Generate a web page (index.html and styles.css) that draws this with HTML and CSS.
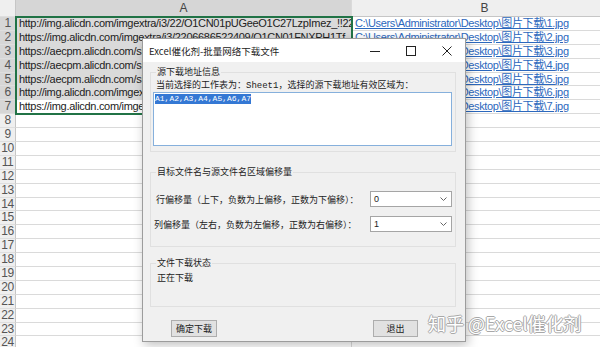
FILE: index.html
```html
<!DOCTYPE html>
<html lang="zh-CN">
<head>
    <meta charset="UTF-8">
    <title>Excel催化剂-批量网络下载文件</title>
    <link rel="stylesheet" href="styles.css">
</head>
<body>
    <div class="sheet">
        <div class="row head">
            <div class="rh"></div>
            <div class="cell a on">A</div>
            <div class="cell b">B</div>
        </div>
        <div class="row"><div class="rh on">1</div><div class="cell a hl">http://img.alicdn.com/imgextra/i3/22/O1CN01pUGeeO1C27LzpImez_!!2206686522409</div><div class="cell b"><a>C:\Users\Administrator\Desktop\图片下载\1.jpg</a></div></div>
        <div class="row"><div class="rh on">2</div><div class="cell a hl">https://img.alicdn.com/imgextra/i3/2206686522409/O1CN01FNXPH1Tf</div><div class="cell b"><a>C:\Users\Administrator\Desktop\图片下载\2.jpg</a></div></div>
        <div class="row"><div class="rh on">3</div><div class="cell a hl">https://aecpm.alicdn.com/simba/img/TB1XotJXQfb_XXXXXXXXXXX</div><div class="cell b"><a>C:\Users\Administrator\Desktop\图片下载\3.jpg</a></div></div>
        <div class="row"><div class="rh on">4</div><div class="cell a hl">https://aecpm.alicdn.com/simba/img/TB1JNHwKFXXXXafXVXXSutb</div><div class="cell b"><a>C:\Users\Administrator\Desktop\图片下载\4.jpg</a></div></div>
        <div class="row"><div class="rh on">5</div><div class="cell a hl">https://aecpm.alicdn.com/simba/img/TB183NQapLM8KJjSZFBSutJ</div><div class="cell b"><a>C:\Users\Administrator\Desktop\图片下载\5.jpg</a></div></div>
        <div class="row"><div class="rh on">6</div><div class="cell a hl">http://img.alicdn.com/imgextra/i1/2206686522409/O1CN01nF</div><div class="cell b"><a>C:\Users\Administrator\Desktop\图片下载\6.jpg</a></div></div>
        <div class="row"><div class="rh on">7</div><div class="cell a">https://img.alicdn.com/imgextra/i4/2206686522409/O1CN01w</div><div class="cell b"><a>C:\Users\Administrator\Desktop\图片下载\7.jpg</a></div></div>
        <div class="row"><div class="rh">8</div><div class="cell a"></div><div class="cell b"></div></div>
        <div class="row"><div class="rh">9</div><div class="cell a"></div><div class="cell b"></div></div>
        <div class="row"><div class="rh">10</div><div class="cell a"></div><div class="cell b"></div></div>
        <div class="row"><div class="rh">11</div><div class="cell a"></div><div class="cell b"></div></div>
        <div class="row"><div class="rh">12</div><div class="cell a"></div><div class="cell b"></div></div>
        <div class="row"><div class="rh">13</div><div class="cell a"></div><div class="cell b"></div></div>
        <div class="row"><div class="rh">14</div><div class="cell a"></div><div class="cell b"></div></div>
        <div class="row"><div class="rh">15</div><div class="cell a"></div><div class="cell b"></div></div>
        <div class="row"><div class="rh">16</div><div class="cell a"></div><div class="cell b"></div></div>
        <div class="row"><div class="rh">17</div><div class="cell a"></div><div class="cell b"></div></div>
        <div class="row"><div class="rh">18</div><div class="cell a"></div><div class="cell b"></div></div>
        <div class="row"><div class="rh">19</div><div class="cell a"></div><div class="cell b"></div></div>
        <div class="row"><div class="rh">20</div><div class="cell a"></div><div class="cell b"></div></div>
        <div class="row"><div class="rh">21</div><div class="cell a"></div><div class="cell b"></div></div>
        <div class="row"><div class="rh">22</div><div class="cell a"></div><div class="cell b"></div></div>
        <div class="row"><div class="rh">23</div><div class="cell a"></div><div class="cell b"></div></div>
        <div class="row"><div class="rh">24</div><div class="cell a"></div><div class="cell b"></div></div>

        <!-- 选区边框 A1:A7 -->
        <div class="sel-box"></div>
    </div>

    <div class="dialog">
        <div class="titlebar">
            <span class="title">Excel催化剂-批量网络下载文件</span>
            <div class="win-btns">
                <span class="win-btn"><svg width="10" height="10" viewBox="0 0 10 10"><path d="M0 5.5h10" stroke="#222" stroke-width="1"/></svg></span>
                <span class="win-btn"><svg width="10" height="10" viewBox="0 0 10 10"><rect x="0.5" y="0.5" width="9" height="9" fill="none" stroke="#222" stroke-width="1"/></svg></span>
                <span class="win-btn"><svg width="10" height="10" viewBox="0 0 10 10"><path d="M0.5 0.5L9.5 9.5M9.5 0.5L0.5 9.5" stroke="#222" stroke-width="1"/></svg></span>
            </div>
        </div>

        <div class="dlg-body">
            <fieldset class="group g1">
                <legend>源下载地址信息</legend>
                <div class="line">当前选择的工作表为：<span class="mono">Sheet1</span>，选择的源下载地址有效区域为：</div>
                <div class="textbox"><span class="selected">A1,A2,A3,A4,A5,A6,A7</span></div>
            </fieldset>

            <fieldset class="group g2">
                <legend>目标文件名与源文件名区域偏移量</legend>
                <div class="opt first">
                    <span>行偏移量（上下，负数为上偏移，正数为下偏移）：</span>
                    <div class="combo"><span class="val">0</span><svg width="7" height="4" viewBox="0 0 7 4"><path d="M0.5 0.5L3.5 3.5L6.5 0.5" fill="none" stroke="#666"/></svg></div>
                </div>
                <div class="opt second">
                    <span>列偏移量（左右，负数为左偏移，正数为右偏移）：</span>
                    <div class="combo"><span class="val">1</span><svg width="7" height="4" viewBox="0 0 7 4"><path d="M0.5 0.5L3.5 3.5L6.5 0.5" fill="none" stroke="#666"/></svg></div>
                </div>
            </fieldset>

            <fieldset class="group g3">
                <legend>文件下载状态</legend>
                <div class="line status">正在下载</div>
            </fieldset>

            <div class="actions">
                <button class="btn ok">确定下载</button>
                <button class="btn quit">退出</button>
            </div>
        </div>
    </div>

    <div class="watermark">知乎 @Excel催化剂</div>
</body>
</html>
```

FILE: styles.css
```css
:root {
    --grid: #dadada;
    --head-bg: #efefef;
    --head-on: #d6d6d6;
    --sel-fill: #dadada;
    --excel-green: #217346;
    --link: #2c68bd;
    --dlg-bg: #f0f0f0;
    --cjk: "Noto Sans CJK SC", "Noto Sans", sans-serif;
}

* {
    box-sizing: border-box;
}

body {
    margin: 0;
    width: 600px;
    height: 347px;
    overflow: hidden;
    position: relative;
    background: #fff;
    font-family: "Liberation Sans", "Noto Sans CJK SC", sans-serif;
    color: #222;
}

/* 工作表 */
.sheet {
    position: relative;
    width: 600px;
    height: 347px;
    overflow: hidden;
}

.row {
    display: grid;
    grid-template-columns: 16px 336px 266px;
    height: 13.9px;
}

.row.head {
    height: 17px;
}

.rh {
    background: var(--head-bg);
    border-right: 1px solid #c6c6c6;
    border-bottom: 1px solid #dedede;
    font-size: 12px;
    line-height: 13px;
    text-align: center;
    color: #555;
    overflow: hidden;
    letter-spacing: -0.5px;
}

.rh.on {
    background: var(--head-on);
}

.cell {
    border-right: 1px solid var(--grid);
    border-bottom: 1px solid var(--grid);
    font-size: 11px;
    line-height: 13px;
    padding-left: 3px;
    white-space: nowrap;
    overflow: hidden;
    letter-spacing: -0.3px;
}

.cell.b {
    letter-spacing: -0.35px;
}

.head .cell {
    background: var(--head-bg);
    border-bottom: 1px solid #c6c6c6;
    text-align: center;
    padding: 0;
    font-size: 12px;
    line-height: 17px;
    letter-spacing: 0;
    color: #444;
}

.head .cell.on {
    background: var(--head-on);
}

.cell.hl {
    background: var(--sel-fill);
}

.cell.b a {
    color: var(--link);
    text-decoration: underline;
}

.sel-box {
    position: absolute;
    left: 15px;
    top: 16px;
    width: 338px;
    height: 99px;
    border: 2px solid var(--excel-green);
    pointer-events: none;
}

/* 对话框 */
.dialog {
    position: absolute;
    left: 142px;
    top: 38px;
    width: 324px;
    height: 304px;
    background: var(--dlg-bg);
    border: 1px solid #9c9c9c;
    box-shadow: 2px 3px 10px rgba(0, 0, 0, 0.25);
    font-family: var(--cjk);
    font-size: 9px;
    color: #222;
}

.titlebar {
    height: 23px;
    background: #fff;
    display: flex;
    align-items: center;
}

.title {
    padding-left: 6px;
    font-size: 9.5px;
}

.win-btns {
    margin-left: auto;
    display: flex;
    height: 100%;
}

.win-btn {
    width: 36px;
    display: flex;
    align-items: center;
    justify-content: center;
}

.dlg-body {
    padding: 4px 9px 0 7px;
    display: flex;
    flex-direction: column;
}

.group {
    margin: 0;
    padding: 0 3px 0 2px;
    border: 1px solid #e0e0e0;
    min-width: 0;
}

.group legend {
    padding: 0 1px;
    margin-left: 3px;
    font-size: 9px;
    line-height: 12px;
}

.line {
    line-height: 12px;
    padding-left: 3px;
    white-space: nowrap;
}

.mono {
    font-family: "Liberation Mono", monospace;
    font-size: 9px;
}

.g1 {
    height: 86px;
}

.g1 .line {
    margin-top: 1px;
}

.textbox {
    height: 54px;
    background: #fff;
    border: 1px solid #86b0dc;
    padding: 0 0 0 1px;
    line-height: 10px;
}

.textbox .selected {
    background: #3478d4;
    color: #fff;
    font-family: "Liberation Mono", monospace;
    font-size: 8px;
    display: inline-block;
    line-height: 10px;
}

.g2 {
    margin-top: 14px;
    height: 81px;
}

.opt {
    display: flex;
    align-items: center;
    justify-content: space-between;
    padding-left: 3px;
}

.opt.first {
    margin-top: 13px;
}

.opt.second {
    margin-top: 9px;
    padding-left: 1px;
}

.combo {
    width: 82px;
    height: 16px;
    background: #fff;
    border: 1px solid #a5a5a5;
    display: flex;
    align-items: center;
    justify-content: space-between;
    padding: 0 4px 0 3px;
}

.combo .val {
    font-family: "Liberation Sans", sans-serif;
    font-size: 9px;
}

.g3 {
    margin-top: 10px;
    height: 50px;
}

.status {
    margin-top: 3px;
    padding-left: 4px;
}

.actions {
    display: flex;
    margin-top: 13px;
}

.btn {
    height: 17px;
    background: #e1e1e1;
    border: 1px solid #adadad;
    font-family: var(--cjk);
    font-size: 9px;
    line-height: 15px;
    padding: 0;
    color: #222;
}

.btn.ok {
    width: 46px;
    margin-left: 21px;
}

.btn.quit {
    width: 45px;
    margin-left: auto;
    margin-right: 38px;
}

/* 水印 */
.watermark {
    position: absolute;
    left: 428px;
    top: 312px;
    font-family: var(--cjk);
    font-size: 18px;
    line-height: 22px;
    color: #fff;
    text-shadow: -1px 0 #a8a8a8, 1px 0 #a8a8a8, 0 -1px #a8a8a8, 0 1px #a8a8a8;
    white-space: nowrap;
}
```
